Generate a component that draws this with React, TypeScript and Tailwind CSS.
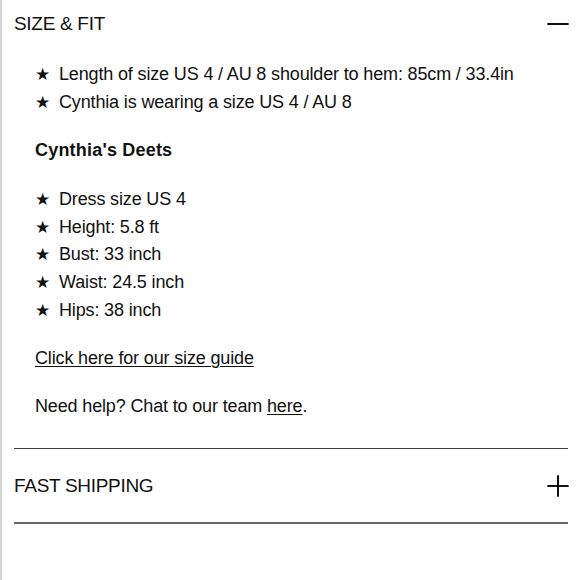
import { Minus, Plus } from "lucide-react";

const fitItems = [
  "Length of size US 4 / AU 8 shoulder to hem: 85cm / 33.4in",
  "Cynthia is wearing a size US 4 / AU 8",
];

const deets = [
  "Dress size US 4",
  "Height: 5.8 ft",
  "Bust: 33 inch",
  "Waist: 24.5 inch",
  "Hips: 38 inch",
];

function StarList({ items }: { items: string[] }) {
  return (
    <ul className="flex flex-col">
      {items.map((item) => (
        <li key={item} className="flex items-center h-[27.75px]">
          <span className="w-[24px] text-[17px] leading-none">★</span>
          <span>{item}</span>
        </li>
      ))}
    </ul>
  );
}

export default function App() {
  return (
    <div
      className="w-[580px] h-[580px] bg-white border-l-2 border-[#d4d4d4] text-[#111] overflow-hidden"
      style={{ fontFamily: '"Liberation Sans", Arial, sans-serif' }}
    >
      <div className="pl-[12px] pr-[12px]">
        {/* size & fit */}
        <div className="flex items-center justify-between h-[48px]">
          <h3 className="text-[19px] tracking-[-0.3px]">SIZE &amp; FIT</h3>
          <Minus className="w-[34px] h-[34px] -mr-[7px]" strokeWidth={1.4} />
        </div>

        <div className="pl-[21px] pt-[13px] text-[18px] tracking-[-0.15px] pb-[28px]">
          <StarList items={fitItems} />

          <p className="font-bold tracking-[0.2px] mt-[20px] mb-[22px] h-[27px] leading-[27px]">
            Cynthia's Deets
          </p>

          <StarList items={deets} />

          <a className="block mt-[21px] underline underline-offset-2 leading-[27px]">
            Click here for our size guide
          </a>

          <p className="mt-[21px] leading-[27px]">
            Need help? Chat to our team <span className="underline underline-offset-2">here</span>.
          </p>
        </div>

        {/* fast shipping */}
        <div className="border-t border-[#444] border-b-2 border-b-[#666] flex items-center justify-between h-[76px] pt-[1px]">
          <h3 className="text-[19px] tracking-[-0.3px]">FAST SHIPPING</h3>
          <Plus className="w-[34px] h-[34px] -mr-[7px]" strokeWidth={1.4} />
        </div>
      </div>
    </div>
  );
}
